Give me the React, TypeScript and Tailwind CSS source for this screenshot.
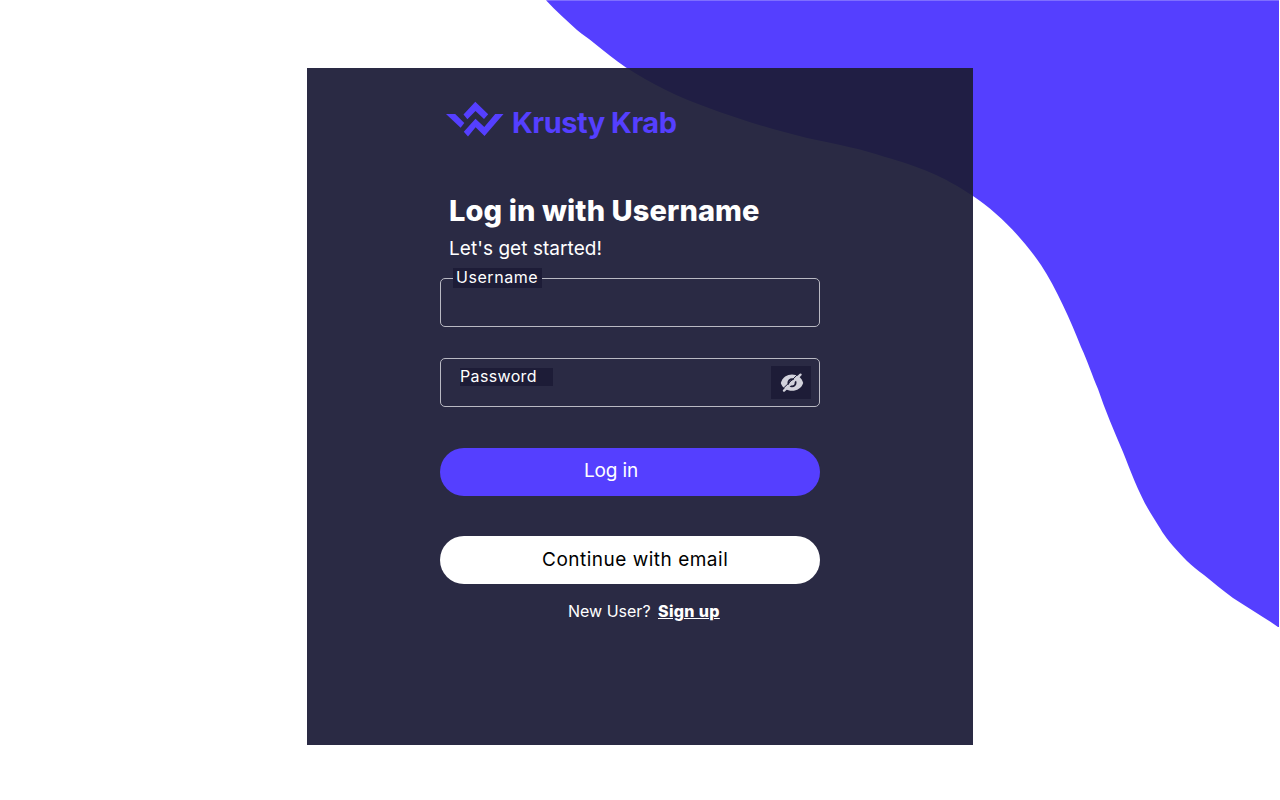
import React from "react";

function Backdrop() {
  return (
    <svg className="absolute inset-0 h-[800px] w-[1280px]" viewBox="0 0 1280 800" fill="#553fff" aria-hidden="true">
      <path d="M546 0.2 C556 11 567 21 577 30 C583 35 588 38 594 43 C605 52 615 60 626 67.5 C650 83 680 98 706 107 C735 118 770 129 807 138 C840 145 862 149 885 157 C920 167 943 176 973 196 C997 212 1022 237 1041 265 C1056 288 1071 321 1081 347 C1088 362 1092 375 1098 389 C1105 410 1114 431 1123 452 C1131 472 1140 497 1153 517 C1160 528 1164 536 1173 546 C1182 556 1191 566 1204 575 C1213 582 1222 590 1233 598 C1248 608 1264 617 1278 627 L1279 627 L1279 0.2 Z" />
    </svg>
  );
}

function Logo() {
  return (
    <div className="flex h-[44px] items-start pl-[6px] text-[#553fff]">
      <svg className="h-[40px] w-[58px] shrink-0" viewBox="446 98 58 40" fill="currentColor" aria-hidden="true">
        <path d="M446 114 H455.2 L464.3 123 L460.6 127.8 Z" />
        <path d="M475.3 101.8 L488.2 114.2 L484 119 L475.5 111 L467.4 119.2 L463.5 114.5 Z" />
        <path d="M463.8 131.7 L475.5 118.8 L484.3 127 L495.2 114 H503.5 L484.5 136 L475.6 127.2 L468 136.6 Z" />
      </svg>
      <span className="ml-[8px] mt-[7px] whitespace-nowrap text-[29px] font-bold leading-[36px] tracking-[-0.5px]">Krusty Krab</span>
    </div>
  );
}

function HiddenEye() {
  return (
    <svg className="h-[20px] w-[24px]" viewBox="0 0 24 20" fill="none" aria-hidden="true">
      <path d="M.8 10 C4 -1.2 20 -1.2 23.2 10 C20 20.4 4 20.4 .8 10 Z" fill="#d2d2dc" />
      <circle cx="12" cy="9.8" r="3.6" stroke="#1d1c37" strokeWidth="1.9" />
      <path d="M2.4 16.2 L18.4 .8" stroke="#1d1c37" strokeWidth="1" />
      <path d="M4 17.6 L20.5 1.6" stroke="#d2d2dc" strokeWidth="2.3" strokeLinecap="round" />
    </svg>
  );
}

export default function App() {
  return (
    <main className="relative flex h-[800px] w-[1280px] justify-center overflow-hidden bg-white pt-[68px] font-['Inter',sans-serif] text-white">
      <Backdrop />
      <section className="relative h-[677px] w-[666px] bg-[rgba(29,29,56,0.94)] pl-[133px] pt-[30px]">
        <form className="flex w-[380px] flex-col">
          <Logo />
          <h1 className="ml-[9px] mt-[49px] whitespace-nowrap text-[29px] font-extrabold leading-[40px] tracking-[0.1px]">Log in with Username</h1>
          <p className="ml-[9px] mt-[4px] whitespace-nowrap text-[19px] leading-[28px] tracking-[0.05px]">Let's get started!</p>
          <div className="relative mt-[15px] h-[49px] rounded-[5px] border border-[#b9b9c3]">
            <label className="absolute left-[12px] top-[-11px] h-[20px] w-[89px] whitespace-nowrap bg-[#1d1c37] pl-[3px] text-[16px] leading-[18px] tracking-[0.55px]">Username</label>
          </div>
          <div className="mt-[31px] flex h-[49px] items-start justify-between rounded-[5px] border border-[#b9b9c3] pl-[19px] pr-[8px]">
            <label className="mt-[9px] h-[18px] w-[93px] whitespace-nowrap bg-[#1d1c37] text-[16px] leading-[16px] tracking-[0.35px]">Password</label>
            <button type="button" aria-label="Show password" className="mt-[7px] flex h-[33px] w-[40px] items-center justify-center bg-[#1d1c37] pl-[2px]">
              <HiddenEye />
            </button>
          </div>
          <button type="button" className="mt-[41px] flex h-[48px] items-center rounded-full bg-[#553fff] pb-[2px] pl-[144px] text-[19px] leading-[28px] tracking-[-0.15px]">
            <span className="whitespace-nowrap">Log in</span>
          </button>
          <button type="button" className="mt-[40px] flex h-[48px] items-center rounded-full bg-white pl-[102px] text-[19px] leading-[28px] tracking-[0.5px] text-black">
            <span className="whitespace-nowrap">Continue with email</span>
          </button>
          <p className="mt-[15px] flex whitespace-nowrap pl-[128px] text-[16px] leading-[24px]">
            <span className="w-[90px]">New User?</span>
            <a href="#" className="font-extrabold tracking-[0.35px] underline">Sign up</a>
          </p>
        </form>
      </section>
    </main>
  );
}
